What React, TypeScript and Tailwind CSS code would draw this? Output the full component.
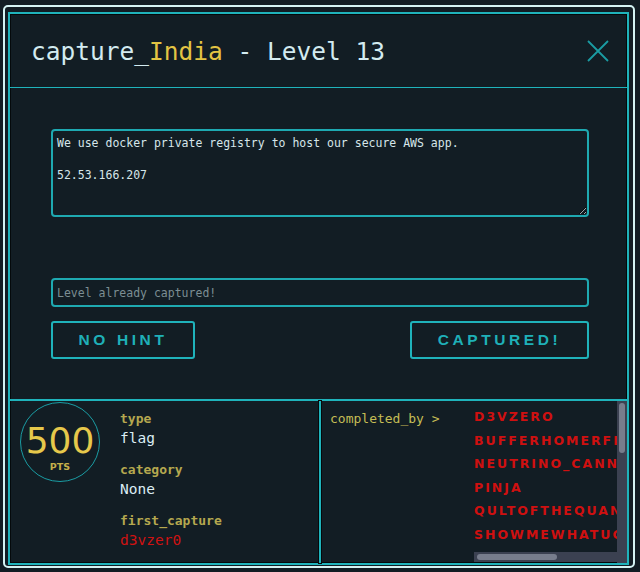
import React from 'react'

const mono = "font-['DejaVu_Sans_Mono','Liberation_Mono',monospace]"

const completedBy = [
	'D3VZERO',
	'BUFFERHOMERFLOW',
	'NEUTRINO_CANNON',
	'PINJA',
	'QULTOFTHEQUANTUMBITS',
	'SHOWMEWHATUGOT',
]

const details = [
	{ label: 'type', value: 'flag', red: false },
	{ label: 'category', value: 'None', red: false },
	{ label: 'first_capture', value: 'd3vzer0', red: true },
]

const App: React.FC = () => {
	return (
		<div className="w-[640px] h-[572px] bg-[#121d24] pt-[5px] pl-[3px]">
			<div className="w-[632px] h-[563px] border-2 border-[#d4f3f3] rounded-[5px] pt-[5px] pb-[1px] pl-[3px] pr-[4px]">
				<div className="w-full h-full border-2 border-[#1fb3bb] shadow-[inset_0_0_0_1px_#05090b] flex flex-col">
					{/* header */}
					<div className="h-[74px] flex-none border-b border-[#1fb3bb] flex items-center justify-between pl-[21px] pr-[18px]">
						<h1 className={`${mono} mt-[3px] text-[24.5px] leading-none text-[#d3ebf0]`}>
							capture_<span className="text-[#e3c443]">India</span> - Level 13
						</h1>
						<svg width="22" height="22" viewBox="0 0 22 22" className="mt-[1px] text-[#1a9ca3]">
							<path d="M1 1 L21 21 M21 1 L1 21" stroke="currentColor" strokeWidth="1.8" fill="none" />
						</svg>
					</div>

					{/* body */}
					<div className="h-[311px] flex-none flex flex-col pt-[41px] pl-[41px] pr-[38px]">
						<textarea
							readOnly
							className={`${mono} h-[88px] w-full bg-transparent border-2 border-[#1ea9b1] rounded-[4px] px-[4px] py-[4px] text-[11.5px] leading-[16px] text-[#d6e6ea] outline-none`}
							value={'We use docker private registry to host our secure AWS app.\n\n52.53.166.207'}
						/>
						<input
							readOnly
							placeholder="Level already captured!"
							className={`${mono} mt-[61px] h-[29px] w-full bg-transparent border-2 border-[#1ea9b1] rounded-[4px] px-[4px] text-[11.5px] text-[#d6e6ea] placeholder:text-[#7c8e93] outline-none`}
						/>
						<div className="mt-[14px] flex justify-between">
							<button className="w-[144px] h-[38px] border-2 border-[#1fb3bb] rounded-[3px] font-['Liberation_Sans',sans-serif] font-bold text-[15.5px] tracking-[3.6px] text-[#1fb0b8]">
								NO HINT
							</button>
							<button className="w-[179px] h-[38px] border-2 border-[#1fb3bb] rounded-[3px] font-['Liberation_Sans',sans-serif] font-bold text-[15.5px] tracking-[3.6px] text-[#1fb0b8]">
								CAPTURED!
							</button>
						</div>
					</div>

					{/* stats */}
					<div className="flex-1 border-t-2 border-[#1fb3bb] flex min-h-0">
						<div className="w-[309px] flex-none flex pl-[10px]">
							<div className="mt-[1px] w-[80px] h-[80px] rounded-full border border-[#1a9ca3] flex flex-col items-center justify-center">
								<span className="font-['DejaVu_Sans',sans-serif] text-[36px] leading-[36px] text-[#e6c84b] mt-[12px]">500</span>
								<span className="font-['DejaVu_Sans',sans-serif] font-bold text-[9.5px] leading-[12px] mt-[2px] text-[#c6b04a]">PTS</span>
							</div>
							<div className={`${mono} ml-[20px] pt-[9px] flex flex-col gap-[13px]`}>
								{details.map(d => (
									<div key={d.label}>
										<div className="text-[13px] leading-[18px] font-bold text-[#b5a84f]">{d.label}</div>
										<div className={`text-[14.5px] leading-[20px] ${d.red ? 'text-[#cf1212]' : 'text-[#dcedf5]'}`}>{d.value}</div>
									</div>
								))}
							</div>
						</div>
						<div className="w-[2px] flex-none bg-[#1fb3bb] shadow-[0_0_0_1px_#05090b]" />
						<div className="flex-1 flex pl-[9px] min-w-0">
							<div className={`${mono} pt-[9px] text-[13px] leading-[18px] text-[#c5bd55]`}>completed_by &gt;</div>
							<div className="relative ml-auto w-[153px] h-full overflow-hidden">
								<ul className="pt-[4px] pr-[10px] font-['DejaVu_Sans',sans-serif] font-bold text-[12.5px] leading-[23.6px] tracking-[2px] text-[#cf1010] whitespace-nowrap">
									{completedBy.map(n => (
										<li key={n}>{n}</li>
									))}
								</ul>
								{/* scrollbars */}
								<div className="absolute right-0 top-0 bottom-0 w-[10px] bg-[#3b4151] px-[2px] pt-[2px]">
									<div className="h-[50px] rounded-full bg-[#777d8c]" />
								</div>
								<div className="absolute left-0 right-[10px] bottom-[1px] h-[10px] bg-[#3b4151] py-[2px] pl-[3px]">
									<div className="w-[80px] h-full rounded-full bg-[#777d8c]" />
								</div>
							</div>
						</div>
					</div>
				</div>
			</div>
		</div>
	)
}

export default App
